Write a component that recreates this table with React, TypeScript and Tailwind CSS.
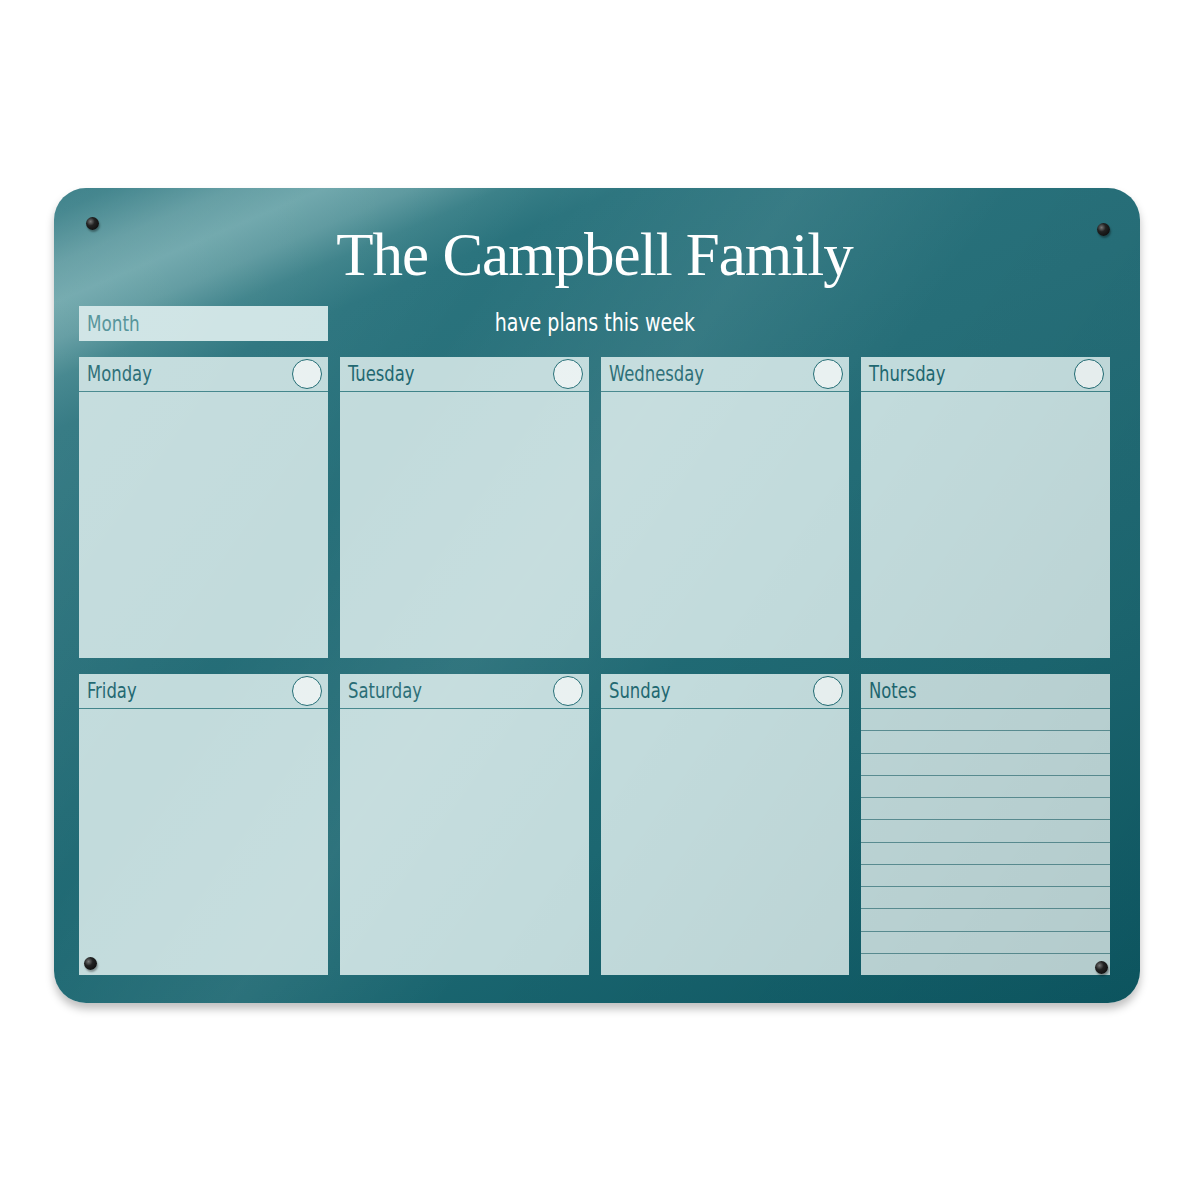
const days = ['Monday', 'Tuesday', 'Wednesday', 'Thursday', 'Friday', 'Saturday', 'Sunday'];

const condensed = "font-['Liberation_Sans_Narrow','DejaVu_Sans_Condensed','Roboto',sans-serif]";

function Pin({ className }: { className: string }) {
  return (
    <div
      className={`absolute w-[13px] h-[13px] rounded-full bg-[radial-gradient(circle_at_35%_35%,#777_0%,#222_35%,#050505_100%)] shadow-[1px_2px_2px_rgba(0,0,0,0.35)] ${className}`}
    />
  );
}

function DayCard({ name }: { name: string }) {
  return (
    <div className="flex flex-col bg-[#c2dbdc]">
      <div className="h-[35px] flex items-center justify-between pl-2 pr-[6px] border-b border-[#3f8389]">
        <span className={`${condensed} text-[22px] leading-none text-[#1e6770] scale-x-[0.83] origin-left`}>{name}</span>
        <div className="w-[30px] h-[30px] rounded-full bg-[#e9f1f1] border-[1.5px] border-[#1f6b73]" />
      </div>
      <div className="flex-1" />
    </div>
  );
}

function NotesCard() {
  return (
    <div className="flex flex-col bg-[#bed7d8]">
      <div className="h-[35px] flex items-center pl-2 border-b border-[#3f8389]">
        <span className={`${condensed} text-[22px] leading-none text-[#1e6770] scale-x-[0.83] origin-left`}>Notes</span>
      </div>
      <div className="flex-1 flex flex-col">
        {Array.from({ length: 12 }).map((_, i) => (
          <div key={i} className={`flex-1 ${i < 11 ? 'border-b border-[#5b8f94]' : ''}`} />
        ))}
      </div>
    </div>
  );
}

export default function App() {
  return (
    <div className="w-[1200px] h-[1200px] bg-white pt-[188px] pl-[54px]">
      <div className="relative w-[1086px] h-[815px] rounded-[32px] overflow-hidden bg-[linear-gradient(157deg,#2a747e_0%,#337b84_2%,#5b989e_6%,#6aa4a9_9%,#5a979d_12%,#3a8088_15%,#2a737d_19%,#266e78_40%,#1c6771_70%,#0d5964_100%)] shadow-[0_6px_8px_rgba(0,0,0,0.25)] pt-[34px] pl-[25px] pr-[30px] pb-[28px] flex flex-col">
        <h1 className="text-center font-['Liberation_Serif',serif] text-white text-[61px] leading-none tracking-[-1px] h-[84px] relative z-10 pt-[2px]">
          The Campbell Family
        </h1>
        <div className="grid relative z-10">
          <div className="col-start-1 row-start-1 w-[249px] h-[35px] bg-[#cde3e4] flex items-center pl-2">
            <span className={`${condensed} text-[22px] leading-none text-[#4b8e94] scale-x-[0.85] origin-left`}>Month</span>
          </div>
          <div className="col-start-1 row-start-1 justify-self-center self-center">
            <span className={`${condensed} text-[24px] leading-none text-white inline-block scale-x-[0.88]`}>have plans this week</span>
          </div>
        </div>
        <div className="mt-4 flex-1 grid grid-cols-4 grid-rows-2 gap-x-3 gap-y-4 relative z-10">
          {days.map((d) => (
            <DayCard key={d} name={d} />
          ))}
          <NotesCard />
        </div>
        <div className="absolute inset-0 z-20 pointer-events-none bg-[linear-gradient(125deg,rgba(255,255,255,0.1)_0%,rgba(255,255,255,0)_30%,rgba(255,255,255,0.07)_45%,rgba(255,255,255,0)_58%,rgba(0,0,0,0.06)_100%)]" />
        <Pin className="z-30 left-[32px] top-[29px]" />
        <Pin className="z-30 right-[30px] top-[35px]" />
        <Pin className="z-30 left-[30px] bottom-[33px]" />
        <Pin className="z-30 right-[32px] bottom-[29px]" />
      </div>
    </div>
  );
}
